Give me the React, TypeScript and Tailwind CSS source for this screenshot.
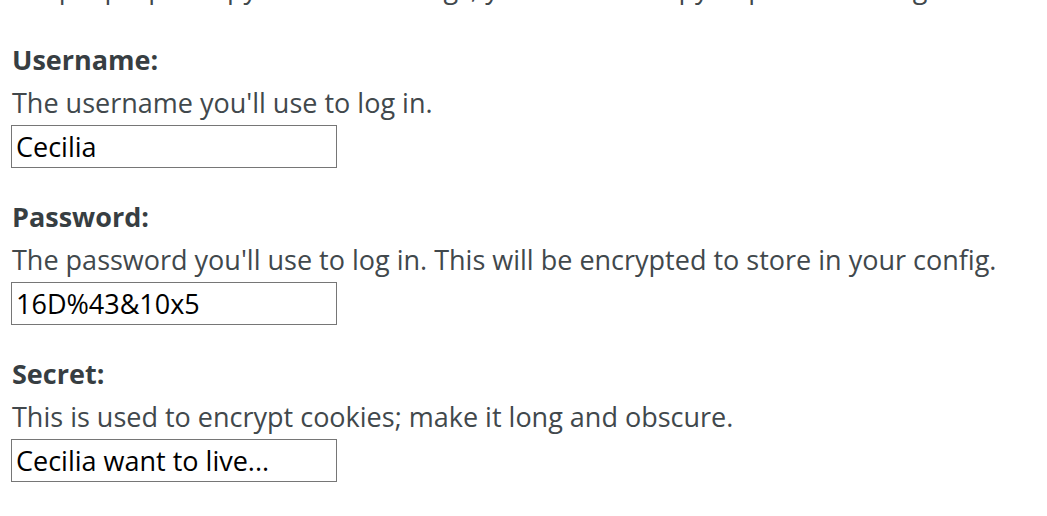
import React from "react";

const fields = [
  {
    label: "Username:",
    hint: "The username you'll use to log in.",
    value: "Cecilia",
  },
  {
    label: "Password:",
    hint: "The password you'll use to log in. This will be encrypted to store in your config.",
    value: "16D%43&10x5",
  },
  {
    label: "Secret:",
    hint: "This is used to encrypt cookies; make it long and obscure.",
    value: "Cecilia want to live...",
  },
];

export default function App() {
  return (
    <div
      className="w-[1047px] h-[516px] overflow-hidden bg-white text-[#41484c] px-[12px]"
      style={{ fontFamily: '"Open Sans", sans-serif' }}
    >
      <p className="text-[27px] leading-[40px] -mt-[32px] whitespace-nowrap">
        Keep a proper copy of these settings; you'll want a copy to paste them again.
      </p>
      <div className="flex flex-col gap-[29px] mt-[32px]">
        {fields.map((f) => (
          <div key={f.label} className="flex flex-col">
            <label className="font-bold text-[27px] leading-[40px] text-[#373e42]">{f.label}</label>
            <span className="text-[27px] leading-[40px] mt-[3px]">{f.hint}</span>
            <input
              defaultValue={f.value}
              className="-ml-[1px] mt-[2px] w-[326px] h-[43px] border border-[#767676] px-[4px] text-[27px] text-black outline-none"
              style={{ fontFamily: '"Open Sans", sans-serif' }}
            />
          </div>
        ))}
      </div>
    </div>
  );
}
